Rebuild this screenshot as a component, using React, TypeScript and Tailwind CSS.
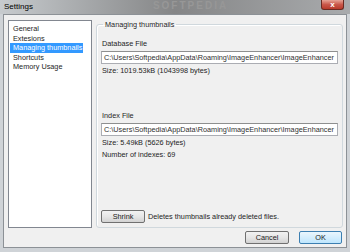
/**
 * Settings dialog (Windows 7 style), thumbnails page.
 */
const items = ["General", "Extesions", "Managing thumbnails", "Shortcuts", "Memory Usage"];
const selected = "Managing thumbnails";

const path = "C:\\Users\\Softpedia\\AppData\\Roaming\\ImageEnhancer\\ImageEnhancer";

function PathBox({ value }: { value: string }) {
  return (
    <div className="h-[13px] flex items-center bg-white border border-[#abadb3] border-t-[#8e8f8f] px-[2px] overflow-hidden whitespace-nowrap text-[#303030]">
      {value}
    </div>
  );
}

function WinButton({ label, primary, className }: { label: string; primary?: boolean; className?: string }) {
  return (
    <button
      className={`h-[13px] flex items-center justify-center rounded-[2px] border text-[#1a1a1a] leading-none ${
        primary
          ? "border-[#3c7fb1] bg-gradient-to-b from-[#eaf6fd] to-[#bee6fd]"
          : "border-[#707070] bg-gradient-to-b from-[#f2f2f2] via-[#e6e6e6] to-[#d2d2d2]"
      } ${className ?? ""}`}
    >
      {label}
    </button>
  );
}

export default function App() {
  return (
    <div
      className="w-[350px] h-[252px] flex flex-col bg-[#cfd3d7] text-[7.3px] leading-[9px] text-[#1e1e1e] overflow-hidden"
      style={{ fontFamily: '"Liberation Sans", Arial, sans-serif' }}
    >
      {/* Title bar */}
      <div className="h-[14px] flex items-start bg-gradient-to-r from-[#c7cbce] via-[#858687] to-[#a9abad]">
        <span className="pl-[4px] pt-[2px] text-[8px] text-black">Settings</span>
        <span className="ml-[120px] pt-[1px] text-[10px] font-bold tracking-[2px] text-[#979797]">SOFTPEDIA</span>
        <div className="ml-auto mr-[6px] w-[23px] h-[10px] rounded-b-[3px] border border-t-0 border-[#6b2a22] bg-gradient-to-b from-[#e5a396] via-[#c9574a] to-[#b83a2a] flex items-center justify-center text-white text-[8px] font-bold leading-none">
          x
        </div>
      </div>

      {/* Client area */}
      <div className="flex-1 mx-[3px] mb-[4px] bg-[#f0f0f0] border border-[#8c9196] flex flex-col pl-[4px] pr-[3px] pt-[5px]">
        <div className="flex gap-[4px] h-[208px]">
          {/* List box */}
          <div className="w-[84px] bg-white border border-[#828790] pt-[3px] px-[1px]">
            {items.map((it) => (
              <div
                key={it}
                className={`h-[9.5px] flex items-center pl-[3px] w-fit pr-[1px] ${
                  it === selected ? "bg-[#3399ff] text-white" : "text-[#1e1e1e]"
                }`}
              >
                {it}
              </div>
            ))}
          </div>

          {/* Group box */}
          <fieldset className="flex-1 border border-[#d0d8dd] rounded-[3px] px-[4px] pb-[4px] flex flex-col shadow-[inset_1px_1px_0_#ffffff]">
            <legend className="ml-[2px] px-[2px] leading-[9px] text-[#1e1e1e]">Managing thumbnails</legend>
            <div className="mt-[10px] pl-[1px]">Database File</div>
            <div className="mt-[3px]">
              <PathBox value={path} />
            </div>
            <div className="mt-[2px] pl-[1px]">Size: 1019.53kB (1043998 bytes)</div>
            <div className="mt-[36px] pl-[1px]">Index File</div>
            <div className="mt-[3px]">
              <PathBox value={path} />
            </div>
            <div className="mt-[2px] pl-[1px]">Size: 5.49kB (5626 bytes)</div>
            <div className="mt-[3px] pl-[1px]">Number of indexes: 69</div>
            <div className="mt-auto flex items-center gap-[3px]">
              <WinButton label="Shrink" className="w-[44px]" />
              <span>Deletes thumbnails already deleted files.</span>
            </div>
          </fieldset>
        </div>

        {/* Dialog buttons */}
        <div className="mt-[3px] flex justify-end gap-[10px] pr-[1px]">
          <WinButton label="Cancel" className="w-[44px]" />
          <WinButton label="OK" primary className="w-[43px]" />
        </div>
      </div>
    </div>
  );
}
